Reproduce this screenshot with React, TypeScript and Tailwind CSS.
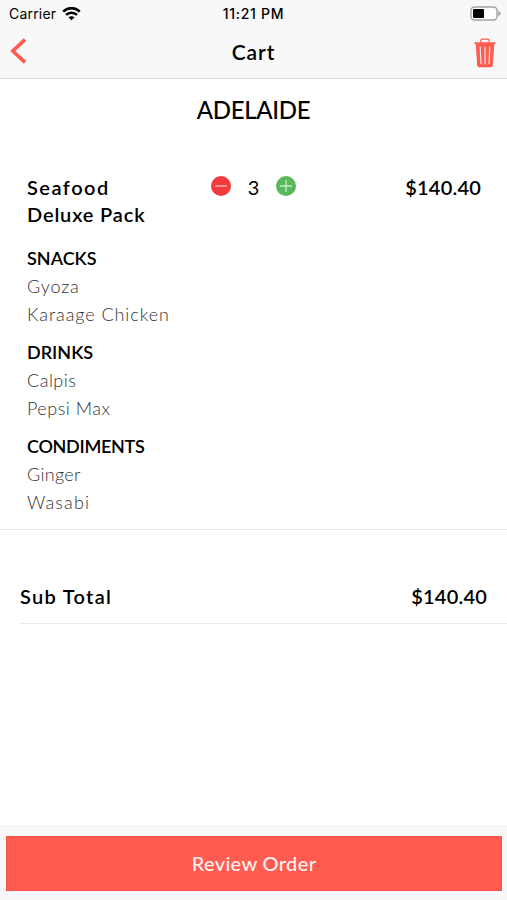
const groups = [
  {
    name: 'SNACKS',
    tracking: 'tracking-[0px]',
    items: [
      { name: 'Gyoza', tracking: 'tracking-[0.9px]' },
      { name: 'Karaage Chicken', tracking: 'tracking-[0.93px]' },
    ],
  },
  {
    name: 'DRINKS',
    tracking: 'tracking-[0px]',
    items: [
      { name: 'Calpis', tracking: 'tracking-[0.5px]' },
      { name: 'Pepsi Max', tracking: 'tracking-[0.5px]' },
    ],
  },
  {
    name: 'CONDIMENTS',
    tracking: 'tracking-[-0.3px]',
    items: [
      { name: 'Ginger', tracking: 'tracking-[0.3px]' },
      { name: 'Wasabi', tracking: 'tracking-[1.1px]' },
    ],
  },
];

const WifiIcon = () => (
  <svg className="h-[14px] w-[19px]" viewBox="0 0 19 14" fill="none" stroke="#000" strokeWidth="2.5">
    <path d="M1.2 4.6C5.8 .1 13.2 .1 17.8 4.6" />
    <path d="M4 7.9C7 5 12 5 15 7.9" />
    <path d="M6.5 10.3C8.2 8.8 10.8 8.8 12.5 10.3L9.5 13.3Z" fill="#000" stroke="none" />
  </svg>
);

const BatteryIcon = () => (
  <svg className="h-[15px] w-[31px]" viewBox="0 0 31 15" fill="none">
    <rect x="1" y="1" width="26" height="13" rx="3.5" fill="#fff" stroke="#a3a3a3" strokeWidth="1.4" />
    <rect x="3" y="3" width="11" height="9" rx="1" fill="#000" />
    <path d="M28.2 4.5L31 7.5L28.2 10.5Z" fill="#a3a3a3" />
  </svg>
);

const TrashIcon = () => (
  <svg className="h-[30px] w-[22px]" viewBox="0 0 22 30" fill="none">
    <path d="M6.8 4.5V2.8C6.8 1.8 7.4 1.2 8.4 1.2H13.6C14.6 1.2 15.2 1.8 15.2 2.8V4.5" stroke="#ff5b51" strokeWidth="1.3" />
    <path d="M.5 4.2H21.5V6H20.3L18.8 27.2C18.7 28.5 18 29.2 16.8 29.2H5.2C4 29.2 3.3 28.5 3.2 27.2L1.7 6H.5Z" fill="#ff5b51" />
    <path d="M6.2 9L7 25.8M11 9V25.8M15.8 9L15 25.8" stroke="#ffe3e0" strokeWidth="1.2" strokeLinecap="round" />
  </svg>
);

const Header = () => (
  <header className="h-[79px] shrink-0 border-b border-[#dcdcdc] bg-[#f8f8f8]">
    <div className="grid h-[27px] grid-cols-3 items-center font-['Inter',sans-serif] text-[14px]">
      <div className="flex items-center gap-[6px] pl-[9px]">
        <span className="tracking-[0.2px]">Carrier</span>
        <WifiIcon />
      </div>
      <span className="text-center text-[14px] font-medium tracking-[0.7px]">11:21 PM</span>
      <div className="flex justify-end pr-[6px]">
        <BatteryIcon />
      </div>
    </div>
    <div className="grid h-[48px] grid-cols-3 items-center">
      <button className="pl-[10px]">
        <svg className="h-[26px] w-[17px]" viewBox="0 0 17 26" fill="none" stroke="#ff5b51" strokeWidth="3.6">
          <path d="M15 1.6L2.8 13L15 24.4" />
        </svg>
      </button>
      <h1 className="text-center text-[21px] leading-none font-semibold tracking-[0.9px]">Cart</h1>
      <button className="flex justify-end pt-[3px] pr-[11px]">
        <TrashIcon />
      </button>
    </div>
  </header>
);

const Quantity = () => (
  <div className="mt-px flex h-[21px] w-[85px] items-center justify-between">
    <svg className="h-5 w-5" viewBox="0 0 20 20">
      <circle cx="10" cy="10" r="10" fill="#f33a3c" />
      <path d="M4 10H16" stroke="#ffc1c1" strokeWidth="1.3" />
    </svg>
    <span className="pt-[3px] text-[20px] leading-none">3</span>
    <svg className="h-5 w-5" viewBox="0 0 20 20">
      <circle cx="10" cy="10" r="10" fill="#58b85c" />
      <path d="M4 10H16M10 4V16" stroke="#c9edca" strokeWidth="1.3" />
    </svg>
  </div>
);

export default function App() {
  return (
    <div className="flex h-[900px] w-[507px] flex-col overflow-hidden bg-white font-['Lato',sans-serif] text-black">
      <Header />

      <main className="flex-1">
        <h2 className="pt-[14px] text-center text-[24px] leading-[34px] font-medium tracking-[-0.3px]">ADELAIDE</h2>

        <section className="h-[403px] border-b border-[#e6e6e6] pt-[47px] pr-[26px] pl-[27px]">
          <div className="flex items-start">
            <h3 className="w-[184px] text-[20px] leading-[27px] font-semibold">
              <span className="block tracking-[1.5px]">Seafood</span>
              <span className="block tracking-[0.85px]">Deluxe Pack</span>
            </h3>
            <Quantity />
            <span className="ml-auto text-[20px] leading-[27px] font-semibold tracking-[0.2px]">$140.40</span>
          </div>
          <div className="mt-[16px] flex flex-col gap-[10px] text-[18px] leading-7">
            {groups.map((group) => (
              <div key={group.name}>
                <h4 className={`font-semibold ${group.tracking}`}>{group.name}</h4>
                {group.items.map((item) => (
                  <p key={item.name} className={`font-light text-[#333] ${item.tracking}`}>
                    {item.name}
                  </p>
                ))}
              </div>
            ))}
          </div>
        </section>

        <section className="ml-5 flex h-[94px] items-end justify-between border-b border-[#ebebeb] pr-[20px] pb-[13px] text-[20px] leading-[27px] font-semibold">
          <span className="tracking-[1.3px]">Sub Total</span>
          <span className="tracking-[0.2px]">$140.40</span>
        </section>
      </main>

      <footer className="h-[74px] shrink-0 border-t border-[#ededed] bg-[#f8f8f8] px-[6px] pt-[9px] pr-[5px]">
        <button className="h-[55px] w-full border border-[#f9544c] bg-[#ff5b51] pb-[2px] text-[20px] font-medium tracking-[0.35px] text-[#fff1ef]">
          Review Order
        </button>
      </footer>
    </div>
  );
}
